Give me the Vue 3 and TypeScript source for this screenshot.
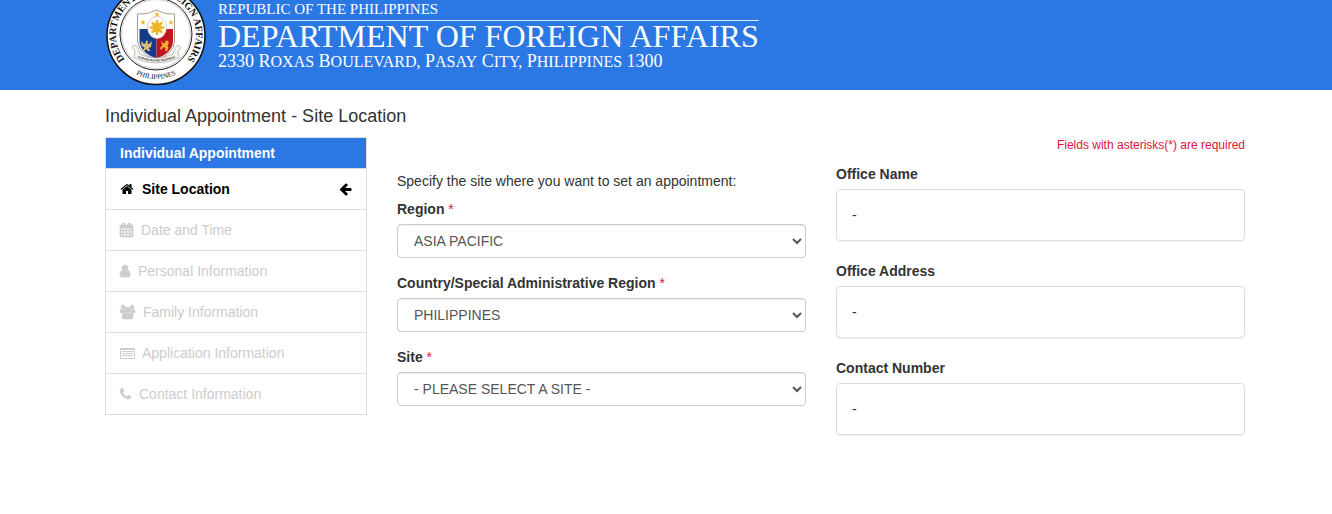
<script setup lang="ts">
import { ref } from 'vue'

interface Step {
  label: string
  viewBox: string
  width: number
  stroke: number
  path: string
}

interface SelectField {
  id: string
  label: string
  options: string[]
}

const steps: Step[] = [
  {
    label: 'Site Location',
    viewBox: '64 0 1664 1792',
    width: 14,
    stroke: 0,
    path: 'M1472 992v480q0 26-19 45t-45 19h-384v-384h-256v384h-384q-26 0-45-19t-19-45v-480q0-1 .5-3t.5-3l575-474 575 474q1 2 1 6zm223-69l-62 74q-8 9-21 11h-3q-13 0-21-7l-692-577-692 577q-12 8-24 7-13-2-21-11l-62-74q-8-10-7-23.5t11-21.5l719-599q32-26 76-26t76 26l244 204v-195q0-14 9-23t23-9h192q14 0 23 9t9 23v408l219 182q10 8 11 21.5t-7 23.5z',
  },
  {
    label: 'Date and Time',
    viewBox: '64 0 1664 1792',
    width: 13,
    stroke: 80,
    path: 'M192 1664h288v-288h-288v288zm352 0h320v-288h-320v288zm-352-352h288v-320h-288v320zm352 0h320v-320h-320v320zm-352-384h288v-288h-288v288zm736 736h320v-288h-320v288zm-384-736h320v-288h-320v288zm768 736h288v-288h-288v288zm-384-352h320v-320h-320v320zm-352-864v-288q0-13-9.5-22.5t-22.5-9.5h-64q-13 0-22.5 9.5t-9.5 22.5v288q0 13 9.5 22.5t22.5 9.5h64q13 0 22.5-9.5t9.5-22.5zm736 864h288v-320h-288v320zm-384-384h320v-288h-320v288zm384 0h288v-288h-288v288zm32-480v-288q0-13-9.5-22.5t-22.5-9.5h-64q-13 0-22.5 9.5t-9.5 22.5v288q0 13 9.5 22.5t22.5 9.5h64q13 0 22.5-9.5t9.5-22.5zm384-64v1280q0 52-38 90t-90 38h-1408q-52 0-90-38t-38-90v-1280q0-52 38-90t90-38h128v-96q0-66 47-113t113-47h64q66 0 113 47t47 113v96h384v-96q0-66 47-113t113-47h64q66 0 113 47t47 113v96h128q52 0 90 38t38 90z',
  },
  {
    label: 'Personal Information',
    viewBox: '256 0 1280 1792',
    width: 10,
    stroke: 80,
    path: 'M1536 1399q0 109-62.5 187t-150.5 78h-854q-88 0-150.5-78t-62.5-187q0-85 8.5-160.5t31.5-152 58.5-131 94-89 134.5-34.5q131 128 313 128t313-128q76 0 134.5 34.5t94 89 58.5 131 31.5 152 8.5 160.5zm-256-887q0 159-112.5 271.5t-271.5 112.5-271.5-112.5-112.5-271.5 112.5-271.5 271.5-112.5 271.5 112.5 112.5 271.5z',
  },
  {
    label: 'Family Information',
    viewBox: '-64 0 1920 1792',
    width: 15,
    stroke: 80,
    path: 'M529 896q-162 5-265 128h-134q-82 0-138-40.5t-56-118.5q0-353 124-353 6 0 43.5 21t97.5 42.5 119 21.5q67 0 133-23-5 37-5 66 0 143 81 256zm1071 637q0 120-73 189.5t-194 69.5h-874q-121 0-194-69.5t-73-189.5q0-53 3.5-103.5t14-109 26.5-108.5 43-97.5 62-81 85.5-53.5 111.5-20q10 0 43 21.5t73 48 107 48 135 21.5 135-21.5 107-48 73-48 43-21.5q61 0 111.5 20t85.5 53.5 62 81 43 97.5 26.5 108.5 14 109 3.5 103.5zm-1024-1277q0 106-75 181t-181 75-181-75-75-181 75-181 181-75 181 75 75 181zm704 384q0 159-112.5 271.5t-271.5 112.5-271.5-112.5-112.5-271.5 112.5-271.5 271.5-112.5 271.5 112.5 112.5 271.5zm576 225q0 78-56 118.5t-138 40.5h-134q-103-123-265-128 81-113 81-256 0-29-5-66 66 23 133 23 59 0 119-21.5t97.5-42.5 43.5-21q124 0 124 353zm-128-609q0 106-75 181t-181 75-181-75-75-181 75-181 181-75 181 75 75 181z',
  },
  {
    label: 'Application Information',
    viewBox: '0 0 1792 1792',
    width: 14,
    stroke: 0,
    path: 'M128 256h1664q128 0 128 128v1152q0 128-128 128h-1664q-128 0-128-128v-1152q0-128 128-128zm0 256v1024h1664v-1024zM256 640h1408v128h-1408zM256 896h1408v128h-1408zM256 1152h1408v128h-1408z',
  },
  {
    label: 'Contact Information',
    viewBox: '192 0 1408 1792',
    width: 11,
    stroke: 60,
    path: 'M1600 1240q0 27-10 70.5t-21 68.5q-21 50-122 106-94 51-186 51-27 0-53-3.5t-57.5-12.5-47-14.5-55.5-20.5-49-18q-98-35-175-83-127-79-264-216t-216-264q-48-77-83-175-3-9-18-49t-20.5-55.5-14.5-47-12.5-57.5-3.5-53q0-92 51-186 56-101 106-122 25-11 68.5-21t70.5-10q14 0 21 3 18 6 53 76 11 19 30 54t35 63.5 31 53.5q3 4 17.5 25t21.5 35.5 7 28.5q0 20-28.5 50t-62 55-62 53-28.5 46q0 9 5 22.5t8.5 20.5 14 24 11.5 19q76 137 174 235t235 174q2 1 19 11.5t24 14 20.5 8.5 22.5 5q18 0 46-28.5t53-62 55-62 50-28.5q14 0 28.5 7t35.5 21.5 25 17.5q25 15 53.5 31t63.5 35 54 30q70 35 76 53 3 7 3 21z',
  },
]

const arrowLeft =
  'M1664 896v128q0 53-32.5 90.5t-84.5 37.5h-704l293 294q38 36 38 90t-38 90l-75 76q-37 37-90 37-52 0-91-37l-651-652q-37-37-37-90 0-52 37-91l651-650q38-38 91-38 52 0 90 38l75 74q38 38 38 91t-38 91l-293 293h704q52 0 84.5 37.5t32.5 90.5z'

const fields: SelectField[] = [
  { id: 'region', label: 'Region', options: ['ASIA PACIFIC'] },
  { id: 'country', label: 'Country/Special Administrative Region', options: ['PHILIPPINES'] },
  { id: 'site', label: 'Site', options: ['- PLEASE SELECT A SITE -'] },
]

const selected = ref<Record<string, string>>({
  region: 'ASIA PACIFIC',
  country: 'PHILIPPINES',
  site: '- PLEASE SELECT A SITE -',
})

const office = [
  { label: 'Office Name', value: '-' },
  { label: 'Office Address', value: '-' },
  { label: 'Contact Number', value: '-' },
]

const rays = [0, 45, 90, 135, 180, 225, 270, 315]
</script>

<template>
  <div class="page">
    <header class="banner">
      <svg class="seal" viewBox="106 0 100 86" role="img" aria-label="Department of Foreign Affairs seal">
        <defs>
          <path id="ring-top" d="M127.500 62.500A40 40 0 1 1 184.500 62.500" />
          <path id="ring-bottom" d="M120 61A45 45 0 0 0 192 61" />
          <path id="ribbon" d="M134 56Q156.500 67 179 56" />
        </defs>
        <circle cx="156" cy="35.500" r="49" fill="#fff" stroke="#111" stroke-width="1.500" />
        <circle cx="156" cy="34" r="36" fill="#fff" stroke="#222" stroke-width="1" />
        <circle cx="156" cy="34" r="34.500" fill="none" stroke="#999" stroke-width="0.500" />
        <text class="ring-text"><textPath href="#ring-top" startOffset="50%" text-anchor="middle">DEPARTMENT OF FOREIGN AFFAIRS</textPath></text>
        <text class="ring-small"><textPath href="#ring-bottom" startOffset="50%" text-anchor="middle">PHILIPPINES</textPath></text>
        <path d="M137.500 14Q148 15 156.500 10Q165 15 174.500 14V41Q174 54 156.500 60Q139 54 137.500 41Z" fill="#fff" stroke="#a99d86" stroke-width="1" />
        <path d="M139.500 29H149Q151 36 156.500 38V58.500Q141 53 139.500 42Z" fill="#153a86" />
        <path d="M173 29H164Q162 36 156.500 38V58.500Q172 53 173 42Z" fill="#c4141f" />
        <ellipse cx="157" cy="27.500" rx="9.500" ry="11" fill="#fff" stroke="#c9bd9d" stroke-width="0.700" />
        <g fill="#f0b428">
          <path v-for="ray in rays" :key="ray" d="M155.500 24L156 20H158L158.500 24Z" :transform="`rotate(${ray} 157 27.500)`" />
          <circle cx="157" cy="27.500" r="4.500" />
          <path id="star" d="M157 11.500L157.700 13.500H159.800L158.100 14.800L158.800 16.800L157 15.600L155.200 16.800L155.900 14.800L154.200 13.500H156.300Z" />
          <use href="#star" x="-14" y="8" />
          <use href="#star" x="14" y="8" />
          <path d="M141 41L144 44L145.500 43L146 40.500L148 41L147.500 43.500L149 44L152 41L151 47L148.500 48L150.500 51H147.500L146.500 49L144 51H142.500L144.500 47.500L141.500 46Z" fill="#d8bd75" />
          <path d="M160.500 41L163 43L165.500 43L165 41L167.500 40.500L169 43L167.500 45L168.500 48L167 51H165L165.500 48L163.500 47L161 50L160 48L162.500 45Z" />
        </g>
        <path d="M132 47Q135 43 138 48L140 54Q156.500 62 173 54L175 48Q178 43 181 48L178 51L179 58Q156.500 68 134 58L135 51Z" fill="#f4f2ec" stroke="#999" stroke-width="0.600" />
        <text class="ribbon-text"><textPath href="#ribbon" startOffset="50%" text-anchor="middle">REPUBLIKA NG PILIPINAS</textPath></text>
      </svg>
      <div class="titles">
        <p class="republic">REPUBLIC OF THE PHILIPPINES</p>
        <p class="department">DEPARTMENT OF FOREIGN AFFAIRS</p>
        <p class="address">2330 <span>Roxas</span> <span>Boulevard,</span> <span>Pasay</span> <span>City,</span> <span>Philippines</span> 1300</p>
      </div>
    </header>

    <main class="content">
      <h1>Individual Appointment - Site Location</h1>
      <div class="columns">
        <nav class="sidebar" aria-label="Appointment steps">
          <h2>Individual Appointment</h2>
          <ol>
            <li v-for="(step, i) in steps" :key="step.label">
              <a href="#" class="step" :class="{ active: i === 0 }" :aria-disabled="i !== 0">
                <svg class="icon" :viewBox="step.viewBox" :width="step.width" height="14" aria-hidden="true">
                  <path :d="step.path" fill="currentColor" stroke="currentColor" :stroke-width="step.stroke" />
                </svg>
                <span>{{ step.label }}</span>
                <svg v-if="i === 0" class="arrow" viewBox="64 0 1664 1792" width="13" height="14" aria-hidden="true">
                  <path :d="arrowLeft" fill="currentColor" />
                </svg>
              </a>
            </li>
          </ol>
        </nav>

        <form class="site-form" @submit.prevent>
          <p>Specify the site where you want to set an appointment:</p>
          <div v-for="field in fields" :key="field.id" class="group">
            <label :for="field.id">{{ field.label }} <span class="star">*</span></label>
            <select :id="field.id" v-model="selected[field.id]">
              <option v-for="option in field.options" :key="option">{{ option }}</option>
            </select>
          </div>
        </form>

        <section class="office">
          <p class="note">Fields with asterisks(*) are required</p>
          <dl>
            <template v-for="item in office" :key="item.label">
              <dt>{{ item.label }}</dt>
              <dd>{{ item.value }}</dd>
            </template>
          </dl>
        </section>
      </div>
    </main>
  </div>
</template>

<style>
body {
  margin: 0;
  background: #fff;
}
</style>

<style scoped>
.page {
  font: 14px/20px "Liberation Sans", Arial, sans-serif;
  color: #333;
}
.page *,
.page {
  box-sizing: border-box;
}
p,
h1,
h2,
ol,
dl,
dd {
  margin: 0;
  padding: 0;
}
.banner {
  display: flex;
  align-items: flex-start;
  gap: 12px;
  min-height: 90px;
  padding: 0 87px 0 106px;
  background: #2b78e4;
  color: #fff;
}
.seal {
  width: 100px;
  height: 86px;
  flex: none;
}
.ring-text {
  font: bold 10px "Liberation Serif", serif;
  fill: #111;
}
.ring-small {
  font: 7px "Liberation Serif", serif;
  fill: #111;
}
.ribbon-text {
  font: bold 3px "Liberation Sans", sans-serif;
  fill: #333;
}
.titles {
  font-family: "Liberation Serif", "Times New Roman", serif;
  white-space: nowrap;
}
.republic {
  padding-bottom: 2px;
  font-size: 15px;
  line-height: 18px;
  border-bottom: 1px solid #dfeafb;
}
.department {
  font-size: 32px;
  line-height: 30px;
}
.address {
  font-size: 18px;
  line-height: 20px;
}
.address span {
  display: inline-block;
  font-size: 16px;
  text-transform: uppercase;
}
.address span::first-letter {
  font-size: 18px;
}
.content {
  padding: 16px 87px 79px 105px;
}
h1 {
  font-size: 18px;
  line-height: 20px;
  font-weight: 400;
}
.columns {
  display: grid;
  grid-template-columns: 262px 1fr 1fr;
  align-items: start;
  gap: 30px;
  margin-top: 11px;
}
.sidebar {
  border: 1px solid #ddd;
}
.sidebar h2 {
  padding: 5px 14px;
  background: #2b78e4;
  color: #fff;
  font-size: 14px;
  line-height: 20px;
  font-weight: 700;
}
.sidebar ol {
  list-style: none;
}
.sidebar li {
  border-top: 1px solid #ddd;
}
.step {
  display: flex;
  align-items: center;
  gap: 8px;
  padding: 10px 14px;
  color: #ccc;
  text-decoration: none;
}
.step.active {
  color: #000;
  font-weight: 700;
}
.icon {
  overflow: visible;
}
.arrow {
  margin-left: auto;
}
.site-form {
  padding-top: 34px;
}
.site-form p {
  margin-bottom: 8px;
}
.group {
  margin-bottom: 15px;
}
.group label {
  display: block;
  margin-bottom: 5px;
  font-weight: 700;
}
.star {
  color: #dc143c;
  font-weight: 400;
}
select {
  display: block;
  width: 100%;
  height: 34px;
  padding: 6px 12px;
  border: 1px solid #ccc;
  border-radius: 4px;
  background-color: #fff;
  box-shadow: inset 0 1px 1px rgba(0, 0, 0, 0.075);
  color: #555;
  font: inherit;
}
.note {
  margin-bottom: 10px;
  color: #dc143c;
  font-size: 12px;
  line-height: 17px;
  text-align: right;
}
.office dt {
  margin-bottom: 5px;
  font-weight: 700;
}
.office dd {
  margin-bottom: 20px;
  padding: 15px;
  border: 1px solid #ddd;
  border-radius: 4px;
  box-shadow: 0 1px 1px rgba(0, 0, 0, 0.05);
}
</style>
